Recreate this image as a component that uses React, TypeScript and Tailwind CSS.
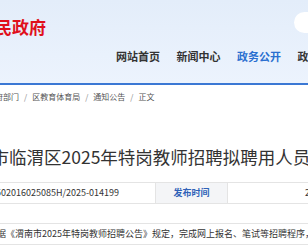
const cjk = { fontFamily: '"Noto Sans CJK SC", "Noto Sans", sans-serif' };

const navItems = [
  { label: "网站首页", active: false },
  { label: "新闻中心", active: false },
  { label: "政务公开", active: true },
  { label: "政务服务", active: false },
];

const crumbs = ["政府部门", "区教育体育局", "通知公告", "正文"];

function Header() {
  return (
    <header className="h-[85px] border-b-2 border-[#3b78d4] bg-gradient-to-b from-[#e3edfa] to-[#ecf3fd]">
      <div className="flex h-[44px] items-start">
        <div className="mt-[15px] flex w-[46px] justify-end overflow-hidden">
          <h1 className="shrink-0 whitespace-nowrap text-[17px] font-bold leading-[24px] text-[#e0101c]">
            渭南市临渭区人民政府
          </h1>
        </div>
        <div className="ml-auto mt-[12px] -mr-[30px] h-[21px] w-[44px] rounded-full bg-white" />
      </div>
      <nav className="ml-[116px] flex gap-[16.5px] whitespace-nowrap">
        {navItems.map((n) => (
          <a
            key={n.label}
            className={
              "text-[11px] font-semibold leading-[24px] " +
              (n.active ? "text-[#2a6fd0]" : "text-[#333]")
            }
          >
            {n.label}
          </a>
        ))}
      </nav>
    </header>
  );
}

function Breadcrumb() {
  return (
    <div className="-ml-[13px] mt-[6px] flex items-center whitespace-nowrap text-[8px] leading-[12px] text-[#555]">
      {crumbs.map((c, i) => (
        <span key={c} className="flex items-center">
          {i > 0 && <span className="mx-[5px] text-[#888]">/</span>}
          {c}
        </span>
      ))}
    </div>
  );
}

export default function App() {
  return (
    <div className="h-[252px] w-[308px] overflow-hidden bg-white" style={cjk}>
      <Header />
      <Breadcrumb />

      <h2 className="-ml-[43.5px] mt-[42px] whitespace-nowrap text-[17.5px] leading-[24px] text-[#333]">
        渭南市临渭区2025年特岗教师招聘拟聘用人员公示
      </h2>

      {/* 信息表 */}
      <div className="mt-[13px] flex h-[22px] w-[420px] border-y border-[#e4e4e4] text-[9px] leading-[20px]">
        <div className="w-[155px] shrink-0 overflow-hidden whitespace-nowrap">
          <span className="-ml-[29px] inline-block text-[#333]">11610502016025085H/2025-014199</span>
        </div>
        <div className="w-[73px] shrink-0 border-x border-[#e4e4e4] bg-[#f4f5f7] text-center font-semibold text-[#2f62b8]">
          发布时间
        </div>
        <div className="pl-[77px] text-[#333]">2025-08-20</div>
      </div>

      <div className="mt-[19px] flex h-[22px] w-[420px] items-center border-y border-[#e4e4e4] text-[9px] text-[#333]">
        <p className="-ml-[12px] whitespace-nowrap leading-[20px]">
          根据《渭南市2025年特岗教师招聘公告》规定，完成网上报名、笔试等招聘程序，现将拟聘用人员予以公示。
        </p>
      </div>
    </div>
  );
}
